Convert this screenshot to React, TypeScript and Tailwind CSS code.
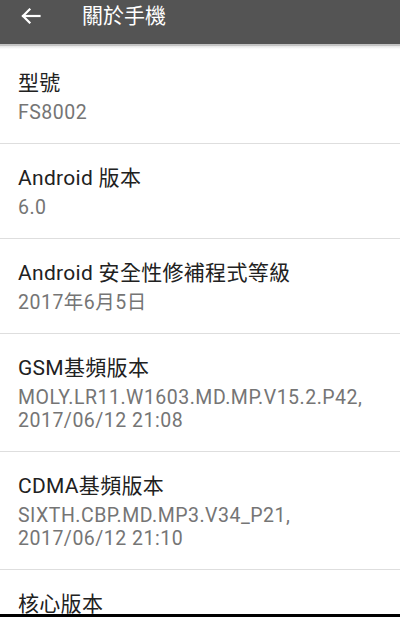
import React from "react";

type Item = { title: string; summary: string[] };

const items: Item[] = [
  { title: "型號", summary: ["FS8002"] },
  { title: "Android 版本", summary: ["6.0"] },
  { title: "Android 安全性修補程式等級", summary: ["2017年6月5日"] },
  { title: "GSM基頻版本", summary: ["MOLY.LR11.W1603.MD.MP.V15.2.P42,", "2017/06/12 21:08"] },
  { title: "CDMA基頻版本", summary: ["SIXTH.CBP.MD.MP3.V34_P21,", "2017/06/12 21:10"] },
  { title: "核心版本", summary: ["3.18.19+"] },
];

function BackArrow() {
  return (
    <svg width="20" height="16" viewBox="0 0 20 16" fill="none" stroke="white" strokeWidth="2.2" strokeLinecap="square">
      <path d="M2 8h16.5" />
      <path d="M8.5 1.5L2 8l6.5 6.5" />
    </svg>
  );
}

export default function App() {
  return (
    <div
      className="w-[400px] h-[617px] flex flex-col bg-white overflow-hidden"
      style={{ fontFamily: "Roboto, 'Noto Sans CJK TC', sans-serif" }}
    >
      <div className="h-[44px] shrink-0 bg-[#545454] flex items-center pb-[12px]">
        <div className="w-[82px] pl-[21px] flex items-center">
          <BackArrow />
        </div>
        <span className="text-white text-[21px] leading-[26px]">關於手機</span>
      </div>
      <div className="shrink-0 h-[2px] bg-[#c4c4c4]" />
      <div className="shrink-0 h-[3px] bg-gradient-to-b from-[#e6e6e6] to-white" />

      <div className="flex-1 overflow-hidden">
        {items.map((it, i) => (
          <div
            key={it.title}
            className={`px-[18px] pt-[21px] pb-[19px] ${i > 0 ? "border-t border-[#dedede]" : ""}`}
          >
            <div className="text-[21px] leading-[26px] tracking-[0.3px] text-[#212121]">{it.title}</div>
            <div className="mt-[5px] text-[19.5px] leading-[23px] tracking-[0.5px] text-[#757575]">
              {it.summary.map((s) => (
                <div key={s}>{s}</div>
              ))}
            </div>
          </div>
        ))}
      </div>

      <div className="shrink-0 h-[3px] bg-black" />
    </div>
  );
}
